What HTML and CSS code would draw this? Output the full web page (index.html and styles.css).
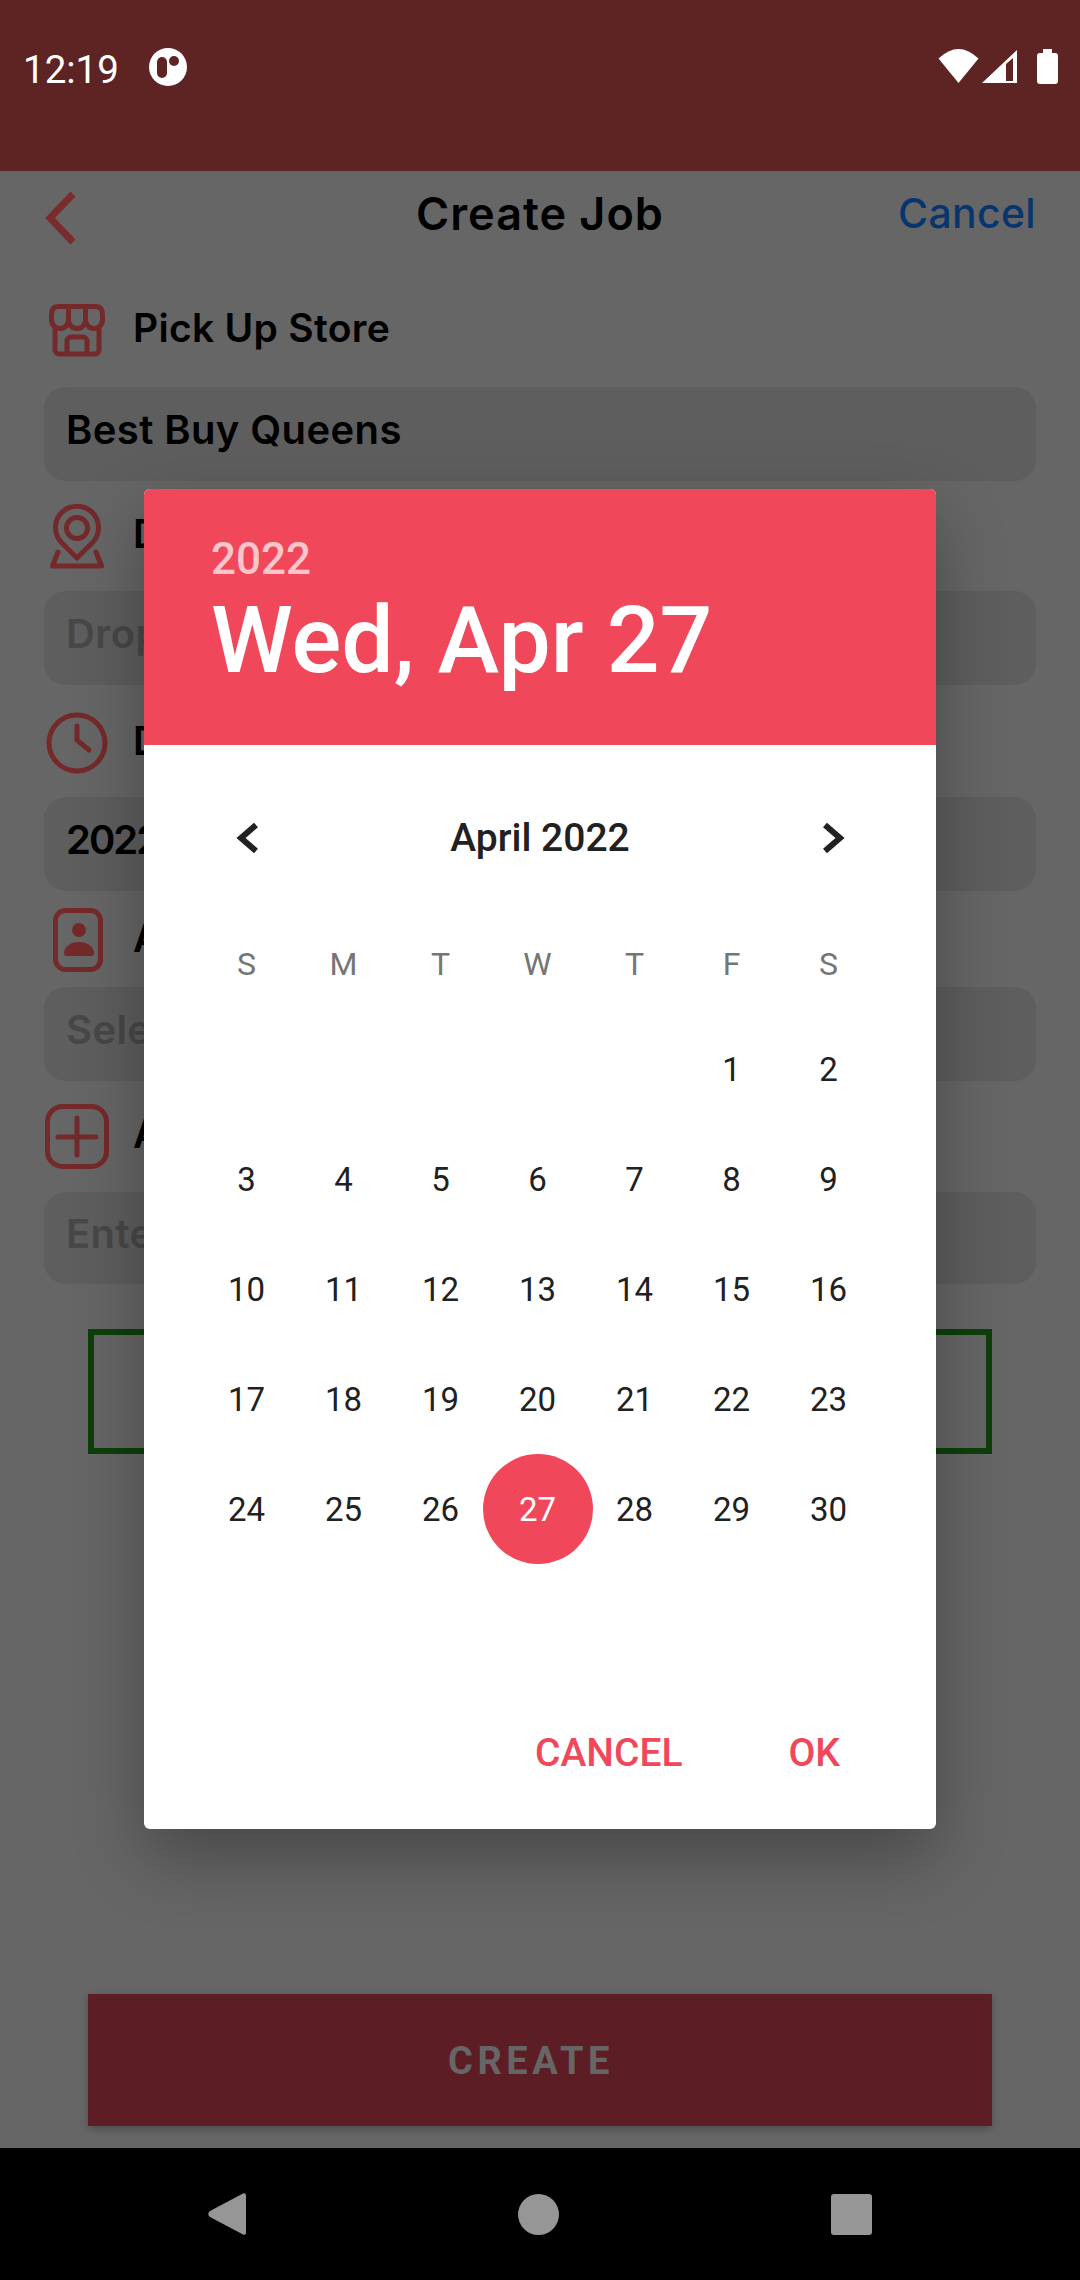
FILE: index.html
```html
<!DOCTYPE html>
<html lang="en">
<head>
    <meta charset="UTF-8">
    <meta name="viewport" content="width=device-width, initial-scale=1.0">
    <title>Create Job</title>
    <link rel="stylesheet" href="styles.css">
</head>
<body>

<!-- Status bar -->
<div class="status-bar">
    <span class="status-time">12:19</span>
    <svg class="status-logo" width="38" height="38" viewBox="0 0 38 38">
        <circle cx="19" cy="19" r="19" fill="#fff"/>
        <rect x="8" y="9" width="10" height="21" rx="5" fill="#5e2424"/>
        <circle cx="25" cy="13" r="5" fill="#5e2424"/>
    </svg>
    <div class="status-icons">
        <svg width="41" height="34" viewBox="0 0 41 34"><path d="M.5 9.5Q20.5-9.5 40.5 9.5L20.5 34Z" fill="#fff"/></svg>
        <svg class="status-signal" width="35" height="33" viewBox="0 0 35 33"><path d="M0 33 35 0V33ZM24 14V31H31V8Z" fill="#fff" fill-rule="evenodd"/></svg>
        <svg class="status-battery" width="21" height="35" viewBox="0 0 21 35"><path d="M6 0H15V4H18A3 3 0 0 1 21 7V32A3 3 0 0 1 18 35H3A3 3 0 0 1 0 32V7A3 3 0 0 1 3 4H6Z" fill="#fff"/></svg>
    </div>
</div>

<!-- Form -->
<div class="page">
    <div class="top-bar">
        <svg class="back-icon" width="40" height="84" viewBox="0 0 40 84"><path d="M29 24 6 48 29 72" transform="translate(0 -1)" fill="none" stroke="#7a2c2c" stroke-width="7"/></svg>
        <div class="top-title">Create Job</div>
        <div class="top-cancel">Cancel</div>
    </div>

    <div class="label-row first">
        <svg class="row-icon" viewBox="0 0 66 70">
            <path d="M14 11.5H52Q58.5 11.5 58.5 20V25A8.5 8.5 0 0 1 41.500 25 8.5 8.5 0 0 1 24.500 25 8.5 8.5 0 0 1 7.500 25V20Q7.500 11.500 14 11.500ZM24.500 11.500V25M41.500 11.500V25M11 33V55A4 4 0 0 0 15 59H51A4 4 0 0 0 55 55V33M23 59V46A4 4 0 0 1 27 42H39A4 4 0 0 1 43 46V59"/>
        </svg>
        <span class="label-text">Pick Up Store</span>
    </div>
    <div class="field">Best Buy Queens</div>

    <div class="label-row gap-20">
        <svg class="row-icon" viewBox="0 0 66 70">
            <path d="M33 57 17 41A21.500 21.500 0 1 1 49 41Z"/>
            <circle cx="33" cy="27" r="10.500"/>
            <path d="M14 51 8.500 65H57.500L52 51"/>
        </svg>
        <span class="label-text">Drop Off</span>
    </div>
    <div class="field placeholder">Drop Off Store</div>

    <div class="label-row gap-23">
        <svg class="row-icon" viewBox="0 0 66 70">
            <circle cx="33" cy="35" r="28"/>
            <path d="M33 18V32L45 42"/>
        </svg>
        <span class="label-text">Date</span>
    </div>
    <div class="field field-date">2022-04-27</div>

    <div class="label-row gap-14">
        <svg class="row-icon" viewBox="0 0 66 70">
            <rect x="11.500" y="5.500" width="45" height="59" rx="10"/>
            <circle class="solid" cx="35" cy="25" r="7"/>
            <path class="solid" d="M20 48A15 11 0 0 1 50 48Q50 51 47 51H23Q20 51 20 48Z"/>
        </svg>
        <span class="label-text">Assign</span>
    </div>
    <div class="field placeholder">Select</div>

    <div class="label-row gap-20">
        <svg class="row-icon" viewBox="0 0 66 70">
            <rect x="3.500" y="5.500" width="59" height="60" rx="15"/>
            <path d="M14 36H52M33 17V54"/>
        </svg>
        <span class="label-text">Add</span>
    </div>
    <div class="field field-last placeholder">Enter</div>

    <div class="outline-box"></div>

    <div class="create-button">CREATE</div>
</div>

<!-- Navigation -->
<div class="nav-bar">
    <svg width="38" height="44" viewBox="0 0 38 44"><path d="M35 1.500A2 2 0 0 1 38 3V41A2 2 0 0 1 35 42.500L2 25A3.500 3.500 0 0 1 2 19Z" fill="#969696"/></svg>
    <div class="nav-circle"></div>
    <div class="nav-square"></div>
</div>

<!-- Date picker -->
<div class="dialog">
    <div class="dialog-header">
        <div class="dialog-year">2022</div>
        <div class="dialog-date">Wed, Apr 27</div>
    </div>
    <div class="month-row">
        <svg width="32" height="40" viewBox="0 0 32 40"><path d="M24 7 9 20 24 33" class="month-arrow"/></svg>
        <span>April 2022</span>
        <svg width="32" height="40" viewBox="0 0 32 40"><path d="M9 7 24 20 9 33" class="month-arrow"/></svg>
    </div>
    <div class="weekdays">
        <span>S</span><span>M</span><span>T</span><span>W</span><span>T</span><span>F</span><span>S</span>
    </div>
    <div class="days">
        <span class="first-day">1</span><span>2</span>
        <span>3</span><span>4</span><span>5</span><span>6</span><span>7</span><span>8</span><span>9</span>
        <span>10</span><span>11</span><span>12</span><span>13</span><span>14</span><span>15</span><span>16</span>
        <span>17</span><span>18</span><span>19</span><span>20</span><span>21</span><span>22</span><span>23</span>
        <span>24</span><span>25</span><span>26</span><span class="selected">27</span><span>28</span><span>29</span><span>30</span>
    </div>
    <div class="dialog-actions">
        <span>CANCEL</span>
        <span>OK</span>
    </div>
</div>

</body>
</html>
```

FILE: styles.css
```css
body {
    font-family: "Roboto", sans-serif;
    background-color: #666;
    margin: 0;
    padding: 0;
    width: 1080px;
    height: 2280px;
    display: flex;
    flex-direction: column;
    overflow: hidden;
    position: relative;
}

/* Status bar */
.status-bar {
    background-color: #5e2424;
    height: 171px;
    box-sizing: border-box;
    padding: 48px 22px 0 23px;
    display: flex;
    align-items: flex-start;
    color: white;
    flex-shrink: 0;
}

.status-time {
    font-size: 38.5px;
    line-height: 44px;
}

.status-logo {
    margin-left: 30px;
}

.status-icons {
    margin-left: auto;
    display: flex;
    align-items: flex-start;
    padding-top: 1px;
}

.status-signal {
    margin-left: 3px;
    margin-top: 1px;
}

.status-battery {
    margin-left: 20px;
}

/* Form */
.page {
    flex: 1;
    display: flex;
    flex-direction: column;
    padding: 0 44px;
}

.top-bar {
    height: 84px;
    display: grid;
    grid-template-columns: 1fr auto 1fr;
    align-items: center;
    font-family: "Inter", sans-serif;
}

.top-title {
    font-size: 45px;
    font-weight: 600;
    color: #000;
    letter-spacing: 1px;
}

.top-cancel {
    font-size: 41px;
    font-weight: 500;
    color: #07366f;
    letter-spacing: 0.3px;
    text-align: right;
}

.label-row {
    height: 70px;
    display: flex;
    align-items: center;
    gap: 23px;
    font-family: "Inter", sans-serif;
    font-size: 39px;
    font-weight: 600;
    color: #000;
    letter-spacing: 0.3px;
    white-space: nowrap;
    margin-bottom: 22px;
}

.label-text {
    padding-bottom: 5px;
}

.label-row.first {
    margin-top: 40px;
}

.label-row.gap-20 {
    margin-top: 20px;
    margin-bottom: 20px;
}

.label-row.gap-23 {
    margin-top: 23px;
    margin-bottom: 19px;
}

.label-row.gap-14 {
    margin-top: 14px;
    margin-bottom: 12px;
}

.row-icon {
    width: 66px;
    height: 70px;
    flex-shrink: 0;
    overflow: visible;
    fill: none;
    stroke: #742a2a;
    stroke-width: 5;
    stroke-linecap: round;
    stroke-linejoin: round;
}

.row-icon .solid {
    fill: #742a2a;
    stroke: none;
}

.field {
    background-color: #5e5e5e;
    border-radius: 22px;
    height: 94px;
    box-sizing: border-box;
    padding: 0 0 10px 22px;
    display: flex;
    align-items: center;
    font-family: "Inter", sans-serif;
    font-size: 40px;
    font-weight: 600;
    letter-spacing: 0.4px;
    color: #000;
}

.field.placeholder {
    color: #484848;
}

.field-date {
    letter-spacing: -2px;
}

.field-last {
    height: 92px;
    margin-top: 1px;
}

.outline-box {
    width: 904px;
    height: 125px;
    box-sizing: border-box;
    border: 6px solid #0e3f0a;
    margin: 45px 0 0 44px;
}

.create-button {
    width: 904px;
    height: 132px;
    background-color: #5d1d24;
    margin: auto 0 22px 44px;
    display: flex;
    align-items: center;
    justify-content: center;
    padding: 2px 18px 0 0;
    box-sizing: border-box;
    color: #666;
    font-size: 38px;
    font-weight: 700;
    letter-spacing: 4.5px;
    box-shadow: 0 3px 8px rgba(0, 0, 0, 0.25);
}

/* Navigation */
.nav-bar {
    height: 132px;
    background-color: #000;
    flex-shrink: 0;
    display: flex;
    align-items: center;
    justify-content: center;
    gap: 272px;
}

.nav-circle {
    width: 41px;
    height: 41px;
    border-radius: 50%;
    background-color: #969696;
}

.nav-square {
    width: 41px;
    height: 41px;
    border-radius: 3px;
    background-color: #969696;
}

/* Date picker */
.dialog {
    position: absolute;
    left: 144px;
    top: 489px;
    width: 792px;
    height: 1340px;
    background-color: white;
    border-radius: 6px;
    display: flex;
    flex-direction: column;
    overflow: hidden;
    box-shadow: 0 28px 70px rgba(0, 0, 0, 0.3);
}

.dialog-header {
    background-color: #f0485a;
    height: 256px;
    box-sizing: border-box;
    padding: 45px 0 0 67px;
    color: white;
    flex-shrink: 0;
}

.dialog-year {
    font-size: 44px;
    font-weight: 500;
    line-height: 50px;
    color: rgba(255, 255, 255, 0.7);
}

.dialog-date {
    font-size: 93px;
    font-weight: 500;
    line-height: 110px;
    margin-top: 2px;
}

.month-row {
    height: 76px;
    margin-top: 55px;
    padding: 0 88px;
    display: flex;
    align-items: center;
    justify-content: space-between;
    font-size: 39px;
    font-weight: 500;
    color: #212121;
}

.month-arrow {
    fill: none;
    stroke: #212121;
    stroke-width: 6;
}

.weekdays, .days {
    display: grid;
    grid-template-columns: repeat(7, 97px);
    padding-left: 54px;
    text-align: center;
}

.weekdays {
    height: 60px;
    line-height: 60px;
    margin-top: 58px;
    font-size: 32px;
    color: #757575;
}

.days {
    margin-top: 20px;
    grid-auto-rows: 110px;
    font-size: 33px;
    color: #212121;
}

.days span {
    display: flex;
    align-items: center;
    justify-content: center;
}

.days .first-day {
    grid-column-start: 6;
}

.days .selected {
    background-color: #f0485a;
    color: white;
    width: 110px;
    height: 110px;
    border-radius: 50%;
    justify-self: center;
}

.dialog-actions {
    margin-top: auto;
    height: 76px;
    margin-bottom: 38px;
    display: flex;
    align-items: center;
    justify-content: flex-end;
    gap: 106px;
    padding-right: 96px;
    font-size: 39px;
    font-weight: 500;
    color: #f0485a;
}
```
